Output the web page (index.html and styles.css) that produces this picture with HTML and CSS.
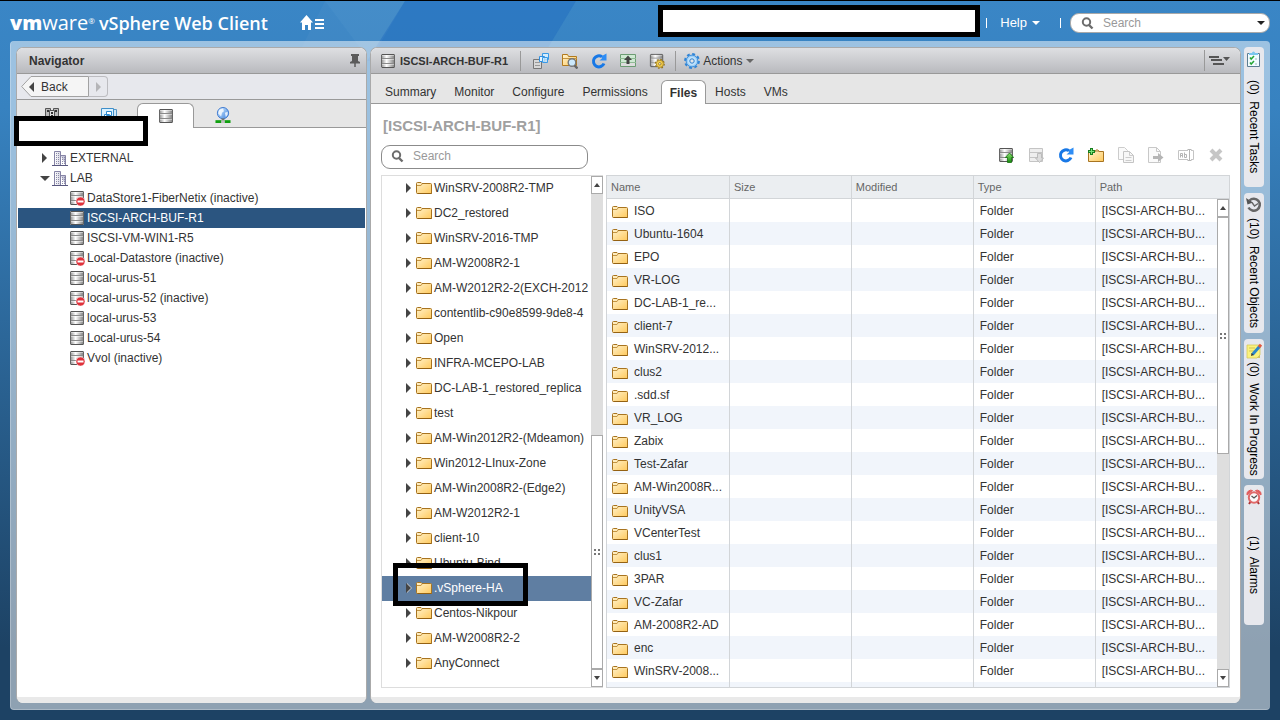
FILE: index.html
```html
<!DOCTYPE html>
<html lang="en">
<head>
<meta charset="utf-8">
<title>vSphere Web Client</title>
<link rel="stylesheet" href="styles.css">
</head>
<body>
<svg class="defs" aria-hidden="true">
  <defs>
    <linearGradient id="gMetal"><stop offset="0" stop-color="#888"/><stop offset=".4" stop-color="#fff"/><stop offset="1" stop-color="#777"/></linearGradient>
    <linearGradient id="gFolder" x2="1" y2="1"><stop offset="0" stop-color="#fff3cf"/><stop offset="1" stop-color="#ffc95c"/></linearGradient>
    <linearGradient id="gGreen" x2="0" y2="1"><stop offset="0" stop-color="#8be36f"/><stop offset="1" stop-color="#17880f"/></linearGradient>
    <linearGradient id="gGlobe" x2="1" y2="1"><stop offset="0" stop-color="#d9efff"/><stop offset="1" stop-color="#3f83e0"/></linearGradient>
    <linearGradient id="gTower" x2="1"><stop offset="0" stop-color="#fff"/><stop offset="1" stop-color="#b9b9cf"/></linearGradient>
  </defs>
  <symbol id="store" viewBox="0 0 16 16"><rect x="1" y="1" width="14" height="14" rx="1" fill="url(#gMetal)"/><path d="M2 1.500h12M2 14.500h12" stroke="#555"/><path d="M1.500 2v12M14.500 2v12" stroke="#666"/><path d="M2 5.500h12M2 10.500h12" stroke="#8a8a8a"/><path d="M2 6.500h12M2 11.500h12M2 2.500h12" stroke="#fff" stroke-opacity=".45"/></symbol>
  <symbol id="storeOff" viewBox="0 0 16 16"><use href="#store" width="16" height="16"/><circle cx="11.500" cy="11.500" r="4.500" fill="#e0313a" stroke="#fff" stroke-width=".5"/><path d="M8.500 11.500h6" stroke="#fff" stroke-width="2"/></symbol>
  <symbol id="dc" viewBox="0 0 16 16"><path d="M2.500 15V1.500h6V15M8.500 5.500h5V15" fill="url(#gTower)" stroke="#8583a5"/><path d="M0 15.500h16" stroke="#57567e"/><path d="M4.500 3v11M6.500 3v11M10.500 7v7M12.500 7v7" stroke="#8a89a8" stroke-dasharray="1 1"/></symbol>
  <symbol id="folder" viewBox="0 0 16 12"><path d="M.5 10.500v-9q0-1 1-1h3.500l1 1h8.500q1 0 1 1v9h-14q-1 0-1-1z" fill="url(#gFolder)" stroke="#a87420"/><path d="M1 3.500h4l1-1.500" fill="none" stroke="#c39442"/><path d="M1.500 11.500h14" stroke="#946112"/></symbol>
  <symbol id="host" viewBox="0 0 16 16"><path d="M1.500 1.500h5v13h-5zM9.500 1.500h5v13h-5z" fill="#bbb" stroke="#555"/><path d="M5.500 3.500h5v11h-5z" fill="#e2e2e2" stroke="#555"/><path d="M3 4h2M11 4h2M7 6h2M7 9h2" stroke="#333" stroke-width="2"/></symbol>
  <symbol id="vms" viewBox="0 0 16 16"><path d="M4.500 2.500h11v12h-11z" fill="#cfe6f7" stroke="#5797c6"/><path d="M.5 1.500h12v13H.5z" fill="#d9f1ff" stroke="#3f8fc9"/><path d="M5.500 4.500h5v4h-5zM3.500 7.500h5v4h-5z" fill="#fff" stroke="#2a88ce"/></symbol>
  <symbol id="globe" viewBox="0 0 16 17"><circle cx="8" cy="6.500" r="6" fill="url(#gGlobe)" stroke="#3c78cf"/><path d="M4 3l4-1.500 1 3-2 1.500-1 4-3-3zM10 6l3-1v3l-2 3z" fill="#fff" fill-opacity=".8"/><path d="M8 12v3" stroke="#777" stroke-width="3"/><path d="M0 15.500h16" stroke="#10a010" stroke-width="3"/><path d="M6 15.500h4" stroke="#bfbfbf" stroke-width="3"/></symbol>
  <symbol id="find" viewBox="0 0 16 16"><circle cx="7.500" cy="7" r="3.700" fill="none" stroke="#6c6c6c" stroke-width="2"/><path d="M10 10l3.500 3.500" stroke="#6c6c6c" stroke-width="2.400"/></symbol>
  <symbol id="refresh" viewBox="0 0 16 16"><path d="M13 10.500A5.500 5.500 0 1 1 11 3.800" fill="none" stroke="#1878e6" stroke-width="3"/><path d="M15.500.5v7h-7l2.500-2.300V3z" fill="#2e8df5"/></symbol>
  <symbol id="vmReg" viewBox="0 0 16 16"><path d="M.5 6.500h8v9h-8z" fill="#d8d8d8" stroke="#777"/><path d="M2 9.500h5M2 12.500h5" stroke="#999"/><path d="M9.500.500h6v6h-6z" fill="#d4edfd" stroke="#3a9ae6"/><path d="M6.500 3.500h5v5h-5z" fill="#e6f5ff" stroke="#2f8fe0"/><path d="M9.500 4.500h5v5h-5z" fill="#c4e5fb" fill-opacity=".8" stroke="#3a9ae6"/></symbol>
  <symbol id="browse" viewBox="0 0 16 16"><path d="M.5 12.500v-11h5l1 2h8v9z" fill="url(#gFolder)" stroke="#b27a1d"/><path d="M1 5.500h14" stroke="#c39442"/><circle cx="10" cy="9.500" r="3.800" fill="#cbe8fb" stroke="#777" stroke-width="1.400"/><path d="M12.500 12.500l3 3" stroke="#666" stroke-width="2.400"/></symbol>
  <symbol id="upload" viewBox="0 0 16 16"><path d="M.5 1.500h15v12H.5z" fill="#cfe9d3" stroke="#6c9c73"/><path d="M0 5.500h16M0 9.500h16" stroke="#8fbb94"/><path d="M1 10h14v3H1z" fill="#ddd"/><path d="M8 2.500l4 4.500H9.500v4h-3V7H4z" fill="#444"/></symbol>
  <symbol id="storeGear" viewBox="0 0 17 17"><use href="#store" width="16" height="16"/><circle cx="11.500" cy="11.500" r="4.600" fill="none" stroke="#94751b" stroke-width="1.500" stroke-dasharray="1.800 1.800"/><circle cx="11.500" cy="11.500" r="3.800" fill="#f4cf4e" stroke="#b08d2a"/><circle cx="11.500" cy="11.500" r="1.300" fill="#fff" stroke="#94751b"/></symbol>
  <symbol id="gear" viewBox="0 0 16 16"><circle cx="8" cy="8" r="6.900" fill="none" stroke="#2f84d6" stroke-width="2" stroke-dasharray="2.900 2.520"/><circle cx="8" cy="8" r="5.900" fill="#9fd0f7" stroke="#3d8edb"/><circle cx="8" cy="8" r="4" fill="#c5e4fb"/><circle cx="8" cy="8" r="2.200" fill="#e4e5e8" stroke="#2c80d0"/></symbol>
  <symbol id="storeUp" viewBox="0 0 16 16"><use href="#store" width="16" height="16"/><path d="M11.500 6l4.200 4.500h-2.200v5h-4v-5H7.300z" fill="url(#gGreen)" stroke="#14720d" stroke-width=".8"/></symbol>
  <symbol id="storeDown" viewBox="0 0 16 16"><path d="M1.500 1.500h13v13h-13z" fill="#eee" stroke="#c4c4c4"/><path d="M2 5.500h12M2 10.500h12" stroke="#c4c4c4"/><path d="M9.500 6.500h4v4.500h2l-4 4.500-4-4.500h2z" fill="#ddd" stroke="#bbb"/></symbol>
  <symbol id="newFolder" viewBox="0 0 16 16"><path d="M.5 14.500v-10h15v10z" fill="url(#gFolder)" stroke="#a87420"/><path d="M7 4.500l1-1.500h2l1 1.500" fill="#fff3cf" stroke="#a87420"/><path d="M3.500 1v7M0 4.500h7" stroke="#187f1f" stroke-width="3"/><path d="M3.500 2v5M1 4.500h5" stroke="#7be07a"/></symbol>
  <symbol id="copy" viewBox="0 0 16 16"><path d="M.5.500h6l3 3v9h-9z" fill="#fafafa" stroke="#ccc"/><path d="M5.500 4.500h6l4 4v7h-10z" fill="#f7f7f7" stroke="#c4c4c4"/><path d="M11.500 4.500v4h4M7.500 10.500h6M7.500 13.500h6" fill="none" stroke="#ccc"/></symbol>
  <symbol id="move" viewBox="0 0 16 16"><path d="M.5.500h8l4 4v11H.5z" fill="#fafafa" stroke="#c8c8c8"/><path d="M8.500.500v4h4" fill="none" stroke="#c8c8c8"/><path d="M5 9h5V6l5.500 4.500L10 15v-3H5z" fill="#b5b5b5"/></symbol>
  <symbol id="rename" viewBox="0 0 16 16"><path d="M10 3.500H.5v9H10M13 3.500h2.500v9H13" fill="none" stroke="#c4c4c4"/><path d="M2.500 10.500v-4h2v4M2.500 8.500h2M6.500 5.500v5h2v-3h-2M9.500 2.500h4M9.500 13.500h4M11.500 2.500v11" fill="none" stroke="#b5b5b5"/></symbol>
  <symbol id="remove" viewBox="0 0 16 16"><path d="M3 3l10 10M13 3L3 13" stroke="#c6c6c6" stroke-width="4"/></symbol>
  <symbol id="pin" viewBox="0 0 10 14"><path d="M1 0h8v2H8v5l2 1v1.500H0V8l2-1V2H1z" fill="#5b5b5b"/><path d="M5 9v4" stroke="#5b5b5b" stroke-width="1.500"/></symbol>
  <symbol id="tasks" viewBox="0 0 16 16"><path d="M1.500 2.500h12v13h-12z" fill="#f1fbff" stroke="#5c7d92"/><path d="M3 4V2h3a1.500 1.500 0 0 1 3 0h3v2z" fill="#7bc6ee"/><path d="M4 6.500l1.200 1.500L8 5M4 11.500l1.200 1.500L8 10" fill="none" stroke="#25a634" stroke-width="1.500"/><path d="M9 8h2M9 13h2" stroke="#9bb"/></symbol>
  <symbol id="recent" viewBox="0 0 16 16"><path d="M3.500 3.500A6 6 0 1 1 2.500 10.500" fill="none" stroke="#666" stroke-width="2.500"/><path d="M0 1l1.500 6.500L7 5.500z" fill="#555"/><path d="M6 5.500L8.500 9 12 6.500" fill="none" stroke="#666" stroke-width="1.300"/></symbol>
  <symbol id="note" viewBox="0 0 16 16"><path d="M1 2h13v10l-3 3H1z" fill="#fbf27c" stroke="#d6c95a" stroke-width=".8"/><path d="M3 5h6M3 8h5" stroke="#cfc357"/><path d="M14 15l-3-.2 3-3z" fill="#cfc05a"/><path d="M6.500 11.500L13.500 3.500" stroke="#2c87c9" stroke-width="3"/><path d="M13 4l2-2.300" stroke="#e2583e" stroke-width="3"/><path d="M5 13l.5-3 2.300 2z" fill="#333"/></symbol>
  <symbol id="alarm" viewBox="0 0 16 16"><path d="M1 6A4 4 0 0 1 6.500 1.500zM15 6A4 4 0 0 0 9.500 1.500z" fill="#e15b5b" stroke="#e15b5b"/><path d="M3 15l2-3M13 15l-2-3" stroke="#a33" stroke-width="2"/><circle cx="8" cy="8.500" r="5.200" fill="#fafafa" stroke="#e06a6a" stroke-width="2"/><path d="M5.500 7L8 9l3-2.500" fill="none" stroke="#555" stroke-width="1.300"/></symbol>
</svg>

<svg class="facets" viewBox="0 0 1280 60" aria-hidden="true">
  <path d="M325 0H405L370 60z" fill="#fff" fill-opacity=".06"/>
  <path d="M325 0L295 60H370z" fill="#fff" fill-opacity=".03"/>
  <path d="M405 0H576L540 60H367z" fill="#1c66bd" fill-opacity=".4"/>
</svg>

<header class="topbar">
  <div class="brand"><span class="brand-mark"><b>vm</b>ware<sup>®</sup></span> <span class="brand-name">vSphere Web Client</span></div>
  <button class="home" aria-label="Home menu"><svg width="24" height="16" viewBox="0 0 24 16"><path d="M6.500 0L13 7.500h-2V15H8v-5H5v5H2V7.500H0z" fill="#fff"/><path d="M15 5h9M15 9h9M15 13h9" stroke="#fff" stroke-width="2"/></svg></button>
  <div class="redacted redacted-user"></div>
  <button class="help">Help <span class="caret"></span></button>
  <label class="search search-top"><svg class="i16"><use href="#find"/></svg><input type="text" placeholder="Search" aria-label="Search inventory"><span class="caret dark"></span></label>
</header>

<div class="shell">
  <aside class="panel navigator">
    <div class="panel-head"><h2>Navigator</h2><svg class="pin"><use href="#pin"/></svg></div>
    <div class="history">
      <button class="back"><svg class="back-shape" width="68" height="21" viewBox="0 0 68 21"><path d="M.7 10.500L10 .5h57.500v20H10z" fill="#f5f5f5" stroke="#a2a2a2"/></svg><span class="tri left"></span><span>Back</span></button><button class="forward" aria-label="Forward"><span class="tri pale"></span></button>
    </div>
    <div class="nav-tabs">
      <button aria-label="Hosts and Clusters"><svg class="i16"><use href="#host"/></svg></button>
      <button aria-label="VMs and Templates"><svg class="i16"><use href="#vms"/></svg></button>
      <button class="on" aria-label="Storage"><svg class="i16"><use href="#store"/></svg></button>
      <button aria-label="Networking"><svg class="i16"><use href="#globe"/></svg></button>
    </div>
    <div class="redacted redacted-nav"></div>
    <ul class="inventory">
      <li class="dc"><span class="tri"></span><svg class="i16"><use href="#dc"/></svg>EXTERNAL</li>
      <li class="dc"><span class="tri open"></span><svg class="i16"><use href="#dc"/></svg>LAB</li>
      <li><svg class="i16"><use href="#storeOff"/></svg>DataStore1-FiberNetix (inactive)</li>
      <li class="on"><svg class="i16"><use href="#store"/></svg>ISCSI-ARCH-BUF-R1</li>
      <li><svg class="i16"><use href="#store"/></svg>ISCSI-VM-WIN1-R5</li>
      <li><svg class="i16"><use href="#storeOff"/></svg>Local-Datastore (inactive)</li>
      <li><svg class="i16"><use href="#store"/></svg>local-urus-51</li>
      <li><svg class="i16"><use href="#storeOff"/></svg>local-urus-52 (inactive)</li>
      <li><svg class="i16"><use href="#store"/></svg>local-urus-53</li>
      <li><svg class="i16"><use href="#store"/></svg>Local-urus-54</li>
      <li><svg class="i16"><use href="#storeOff"/></svg>Vvol (inactive)</li>
    </ul>
  </aside>

  <main class="panel object">
    <div class="panel-head">
      <svg class="i16"><use href="#store"/></svg><h1>ISCSI-ARCH-BUF-R1</h1>
      <div class="quick">
        <button aria-label="Register VM"><svg class="i16"><use href="#vmReg"/></svg></button>
        <button aria-label="Browse files"><svg class="i16"><use href="#browse"/></svg></button>
        <button aria-label="Refresh"><svg class="i16"><use href="#refresh"/></svg></button>
        <button aria-label="Increase capacity"><svg class="i16"><use href="#upload"/></svg></button>
        <button aria-label="Storage settings"><svg class="i16"><use href="#storeGear"/></svg></button>
      </div>
      <button class="actions"><svg class="i16"><use href="#gear"/></svg>Actions <span class="caret grey"></span></button>
      <button class="layout" aria-label="Layout menu"><svg width="22" height="10" viewBox="0 0 22 10"><path d="M0 1h10M2 4h11M4 8h11" stroke="#555" stroke-width="2"/><path d="M14 1h7l-3.500 4z" fill="#555"/></svg></button>
    </div>
    <nav class="tabs">
      <a href="#summary">Summary</a><a href="#monitor">Monitor</a><a href="#configure">Configure</a><a href="#permissions">Permissions</a><a href="#files" class="on">Files</a><a href="#hosts">Hosts</a><a href="#vmlist">VMs</a>
    </nav>
    <section class="files">
      <h3>[ISCSI-ARCH-BUF-R1]</h3>
      <div class="tools">
        <label class="search"><svg class="i16"><use href="#find"/></svg><input type="text" placeholder="Search" aria-label="Search files"></label>
        <div class="file-actions">
          <button aria-label="Upload"><svg class="i16"><use href="#storeUp"/></svg></button>
          <button aria-label="Download" disabled><svg class="i16"><use href="#storeDown"/></svg></button>
          <button aria-label="Refresh files"><svg class="i16"><use href="#refresh"/></svg></button>
          <button aria-label="New folder"><svg class="i16"><use href="#newFolder"/></svg></button>
          <button aria-label="Copy" disabled><svg class="i16"><use href="#copy"/></svg></button>
          <button aria-label="Move" disabled><svg class="i16"><use href="#move"/></svg></button>
          <button aria-label="Rename" disabled><svg class="i16"><use href="#rename"/></svg></button>
          <button aria-label="Delete" disabled><svg class="i16"><use href="#remove"/></svg></button>
        </div>
      </div>
      <div class="split">
        <div class="tree">
          <ul>
            <li><span class="tri"></span><svg class="fold"><use href="#folder"/></svg>WinSRV-2008R2-TMP</li>
            <li><span class="tri"></span><svg class="fold"><use href="#folder"/></svg>DC2_restored</li>
            <li><span class="tri"></span><svg class="fold"><use href="#folder"/></svg>WinSRV-2016-TMP</li>
            <li><span class="tri"></span><svg class="fold"><use href="#folder"/></svg>AM-W2008R2-1</li>
            <li><span class="tri"></span><svg class="fold"><use href="#folder"/></svg>AM-W2012R2-2(EXCH-2012</li>
            <li><span class="tri"></span><svg class="fold"><use href="#folder"/></svg>contentlib-c90e8599-9de8-4</li>
            <li><span class="tri"></span><svg class="fold"><use href="#folder"/></svg>Open</li>
            <li><span class="tri"></span><svg class="fold"><use href="#folder"/></svg>INFRA-MCEPO-LAB</li>
            <li><span class="tri"></span><svg class="fold"><use href="#folder"/></svg>DC-LAB-1_restored_replica</li>
            <li><span class="tri"></span><svg class="fold"><use href="#folder"/></svg>test</li>
            <li><span class="tri"></span><svg class="fold"><use href="#folder"/></svg>AM-Win2012R2-(Mdeamon)</li>
            <li><span class="tri"></span><svg class="fold"><use href="#folder"/></svg>Win2012-LInux-Zone</li>
            <li><span class="tri"></span><svg class="fold"><use href="#folder"/></svg>AM-Win2008R2-(Edge2)</li>
            <li><span class="tri"></span><svg class="fold"><use href="#folder"/></svg>AM-W2012R2-1</li>
            <li><span class="tri"></span><svg class="fold"><use href="#folder"/></svg>client-10</li>
            <li><span class="tri"></span><svg class="fold"><use href="#folder"/></svg>Ubuntu-Bind</li>
            <li class="on"><span class="tri"></span><svg class="fold"><use href="#folder"/></svg>.vSphere-HA<span class="marker"></span></li>
            <li><span class="tri"></span><svg class="fold"><use href="#folder"/></svg>Centos-Nikpour</li>
            <li><span class="tri"></span><svg class="fold"><use href="#folder"/></svg>AM-W2008R2-2</li>
            <li><span class="tri"></span><svg class="fold"><use href="#folder"/></svg>AnyConnect</li>
          </ul>
          <div class="scroll scroll-tree"><button aria-label="Scroll up"><span class="arrow up"></span></button><div class="gap"></div><div class="thumb"><span class="grip"></span></div><button aria-label="Scroll down"><span class="arrow"></span></button></div>
        </div>
        <div class="grid">
          <table>
            <colgroup><col class="c"><col class="c"><col class="c"><col class="c"><col></colgroup>
            <thead><tr><th>Name</th><th>Size</th><th>Modified</th><th>Type</th><th>Path</th></tr></thead>
            <tbody>
              <tr><td><svg class="fold"><use href="#folder"/></svg>ISO</td><td></td><td></td><td>Folder</td><td>[ISCSI-ARCH-BU...</td></tr>
              <tr><td><svg class="fold"><use href="#folder"/></svg>Ubuntu-1604</td><td></td><td></td><td>Folder</td><td>[ISCSI-ARCH-BU...</td></tr>
              <tr><td><svg class="fold"><use href="#folder"/></svg>EPO</td><td></td><td></td><td>Folder</td><td>[ISCSI-ARCH-BU...</td></tr>
              <tr><td><svg class="fold"><use href="#folder"/></svg>VR-LOG</td><td></td><td></td><td>Folder</td><td>[ISCSI-ARCH-BU...</td></tr>
              <tr><td><svg class="fold"><use href="#folder"/></svg>DC-LAB-1_re...</td><td></td><td></td><td>Folder</td><td>[ISCSI-ARCH-BU...</td></tr>
              <tr><td><svg class="fold"><use href="#folder"/></svg>client-7</td><td></td><td></td><td>Folder</td><td>[ISCSI-ARCH-BU...</td></tr>
              <tr><td><svg class="fold"><use href="#folder"/></svg>WinSRV-2012...</td><td></td><td></td><td>Folder</td><td>[ISCSI-ARCH-BU...</td></tr>
              <tr><td><svg class="fold"><use href="#folder"/></svg>clus2</td><td></td><td></td><td>Folder</td><td>[ISCSI-ARCH-BU...</td></tr>
              <tr><td><svg class="fold"><use href="#folder"/></svg>.sdd.sf</td><td></td><td></td><td>Folder</td><td>[ISCSI-ARCH-BU...</td></tr>
              <tr><td><svg class="fold"><use href="#folder"/></svg>VR_LOG</td><td></td><td></td><td>Folder</td><td>[ISCSI-ARCH-BU...</td></tr>
              <tr><td><svg class="fold"><use href="#folder"/></svg>Zabix</td><td></td><td></td><td>Folder</td><td>[ISCSI-ARCH-BU...</td></tr>
              <tr><td><svg class="fold"><use href="#folder"/></svg>Test-Zafar</td><td></td><td></td><td>Folder</td><td>[ISCSI-ARCH-BU...</td></tr>
              <tr><td><svg class="fold"><use href="#folder"/></svg>AM-Win2008R...</td><td></td><td></td><td>Folder</td><td>[ISCSI-ARCH-BU...</td></tr>
              <tr><td><svg class="fold"><use href="#folder"/></svg>UnityVSA</td><td></td><td></td><td>Folder</td><td>[ISCSI-ARCH-BU...</td></tr>
              <tr><td><svg class="fold"><use href="#folder"/></svg>VCenterTest</td><td></td><td></td><td>Folder</td><td>[ISCSI-ARCH-BU...</td></tr>
              <tr><td><svg class="fold"><use href="#folder"/></svg>clus1</td><td></td><td></td><td>Folder</td><td>[ISCSI-ARCH-BU...</td></tr>
              <tr><td><svg class="fold"><use href="#folder"/></svg>3PAR</td><td></td><td></td><td>Folder</td><td>[ISCSI-ARCH-BU...</td></tr>
              <tr><td><svg class="fold"><use href="#folder"/></svg>VC-Zafar</td><td></td><td></td><td>Folder</td><td>[ISCSI-ARCH-BU...</td></tr>
              <tr><td><svg class="fold"><use href="#folder"/></svg>AM-2008R2-AD</td><td></td><td></td><td>Folder</td><td>[ISCSI-ARCH-BU...</td></tr>
              <tr><td><svg class="fold"><use href="#folder"/></svg>enc</td><td></td><td></td><td>Folder</td><td>[ISCSI-ARCH-BU...</td></tr>
              <tr><td><svg class="fold"><use href="#folder"/></svg>WinSRV-2008...</td><td></td><td></td><td>Folder</td><td>[ISCSI-ARCH-BU...</td></tr>
              <tr><td></td><td></td><td></td><td></td><td></td></tr>
            </tbody>
          </table>
          <div class="scroll scroll-grid"><button aria-label="Scroll list up"><span class="arrow up"></span></button><div class="thumb"><span class="grip"></span></div><div class="gap"></div><button aria-label="Scroll list down"><span class="arrow"></span></button></div>
        </div>
      </div>
    </section>
  </main>

  <div class="dock">
    <button><svg class="i16"><use href="#tasks"/></svg><span>(0)&nbsp; Recent Tasks</span></button>
    <button><svg class="i16"><use href="#recent"/></svg><span>(10)&nbsp; Recent Objects</span></button>
    <button><svg class="i16"><use href="#note"/></svg><span>(0)&nbsp; Work In Progress</span></button>
    <button><svg class="i16"><use href="#alarm"/></svg><span>(1)&nbsp; Alarms</span></button>
  </div>
</div>
</body>
</html>
```

FILE: styles.css
```css
* { box-sizing: border-box; }
body {
  margin: 0;
  height: 100vh;
  display: flex;
  flex-direction: column;
  position: relative;
  overflow: hidden;
  border-top: 1px solid #000;
  background: linear-gradient(#3a86c6 0, #3782c0 15%, #1d4264 90%, #1d4264);
  font: 12px/16px "Liberation Sans", Arial, sans-serif;
  color: #333;
}
h1, h2, h3, ul { margin: 0; padding: 0; list-style: none; }
h1, h2 { font-size: 12px; color: #333; }
button { font: inherit; color: inherit; background: none; border: 0; padding: 0; margin: 0; }
input { font: inherit; border: 0; outline: 0; padding: 0; background: none; flex: 1; min-width: 0; }
input::placeholder { color: #999; opacity: 1; }
.defs { position: absolute; width: 0; height: 0; }
.facets { position: absolute; left: 0; top: 0; width: 1280px; height: 60px; }
.i16 { width: 16px; height: 16px; display: block; flex: none; }
.fold { width: 16px; height: 12px; flex: none; }

/* Small triangles */
.caret { display: inline-block; border: 4px solid transparent; border-top-color: #fff; border-bottom: 0; }
.caret.dark { border-top-color: #222; }
.caret.grey { border-top-color: #666; }
.tri { border: 5px solid transparent; border-left-color: #444; border-right: 0; flex: none; }
.tri.open { border: 5px solid transparent; border-top-color: #444; border-bottom: 0; }
.tri.left { border: 5px solid transparent; border-right-color: #444; border-left: 0; }
.tri.pale { border-left-color: #b5b5b8; }

/* Top bar */
.topbar { position: relative; display: flex; align-items: center; flex: none; height: 40px; padding: 3px 10px 0; color: #fff; }
.brand { display: flex; align-items: baseline; gap: 4px; font: 18px/24px "Open Sans", sans-serif; white-space: nowrap; }
.brand-mark { font-size: 20px; }
.brand-mark b { font-weight: 800; }
.brand-mark sup { font-size: 8px; line-height: 8px; vertical-align: 6px; }
.brand-name { font-weight: 600; }
.home { margin-left: 32px; display: flex; }
.redacted { background: #fff; border: 5px solid #000; }
.redacted-user { width: 322px; height: 32px; margin-left: auto; margin-bottom: 4px; }
.help { display: flex; align-items: center; gap: 5px; margin-left: 6px; padding: 0 20px 0 13px; border: solid #fff; border-width: 0 1px; height: 10px; font-size: 13px; }
.search { display: flex; align-items: center; gap: 8px; width: 207px; height: 24px; padding: 0 9px 2px 7px; border: 1px solid #8b8b8b; border-radius: 9px; background: #fff; }
.search-top { width: 200px; height: 20px; margin-left: 9px; padding: 0 4px 0 8px; border-color: #a9a9a9; }

/* Work area */
.shell { position: relative; flex: 1; min-height: 0; display: flex; margin: 0 10px 10px; padding: 6px 6px 6px 5px; border: 1px solid rgba(255,255,255,.25); border-width: 0 0 1px 1px; border-radius: 4px; background: rgba(255,255,255,.5); }
.panel { display: flex; flex-direction: column; border: 1px solid #aaa; border-bottom: 0; border-radius: 7px; background: #fff; overflow: hidden; position: relative; }
.panel::after { content: ""; flex: none; height: 6px; background: #e9e9e9; }
.panel-head { display: flex; align-items: center; flex: none; height: 26px; border-bottom: 1px solid #999; background: linear-gradient(#dedfe2, #b9babe); }
.navigator { flex: 0 0 351px; margin-right: 3px; overflow: visible; }
.navigator .panel-head { padding: 0 6px 0 12px; justify-content: space-between; border-radius: 6px 6px 0 0; }
.navigator::after { margin-top: auto; border-radius: 0 0 6px 6px; }
.pin { width: 10px; height: 14px; }
.history { display: flex; align-items: center; flex: none; height: 26px; padding-left: 4px; background: #e7e8ed; border-bottom: 1px solid #999; }
.back { position: relative; display: flex; align-items: center; gap: 7px; width: 68px; height: 21px; padding-left: 8px; }
.back-shape { position: absolute; left: 0; top: 0; }
.back span { position: relative; }
.forward { width: 19px; height: 21px; padding-left: 7px; border: 1px solid #bcbcc0; border-left: 0; border-radius: 0 4px 4px 0; display: flex; align-items: center; }
.nav-tabs { display: flex; align-items: flex-end; flex: none; height: 28px; padding-left: 6px; background: #e6e6e6; border-bottom: 1px solid #999; }
.nav-tabs button { width: 57px; height: 25px; display: flex; align-items: center; justify-content: center; }
.nav-tabs .on { margin-bottom: -1px; border: 1px solid #999; border-bottom: 0; border-radius: 6px 6px 0 0; background: #fff; }
.redacted-nav { position: absolute; left: -3px; top: 68px; width: 134px; height: 30px; }
.inventory { padding-top: 20px; }
.inventory li { display: flex; align-items: center; gap: 2px; height: 20px; margin: 0 1px; padding-left: 51px; white-space: nowrap; }
.inventory .dc { padding-left: 24px; }
.inventory .tri { width: 8px; }
.inventory .tri.open { margin-left: -2px; width: 10px; }
.inventory .on { background: #2b5580; color: #fff; }

/* Object view */
.object { flex: 1; min-width: 0; margin-right: 3px; }
.object .panel-head { padding: 0 9px; }
.object h1 { margin-left: 4px; font-size: 11px; white-space: nowrap; }
.quick, .actions { display: flex; align-items: center; height: 20px; border-left: 1px solid #999; }
.quick { gap: 13px; margin-left: 12px; padding: 0 10px 0 12px; }
.actions { padding-left: 8px; gap: 3px; }
.layout { display: flex; align-items: center; height: 21px; margin-left: auto; padding-left: 4px; border-left: 1px solid #999; }
.tabs { display: flex; align-items: flex-end; flex: none; height: 30px; padding-left: 5px; background: #e6e6e6; border-bottom: 1px solid #999; }
.tabs a { padding: 0 9px 3px; color: #333; text-decoration: none; }
.tabs .on { margin: 0 0 -1px 4px; padding: 4px 8px 3px; border: 1px solid #999; border-bottom: 0; border-radius: 6px 6px 0 0; background: #fff; font-weight: bold; }
.files { flex: 1; min-height: 0; display: flex; flex-direction: column; padding: 12px 10px 9px; }
h3 { padding-left: 2px; font-size: 15px; line-height: 20px; color: #a0a0a0; }
.tools { display: flex; justify-content: space-between; align-items: center; margin: 9px 6px 6px 0; flex: none; }
.file-actions { display: flex; gap: 14px; margin-bottom: 4px; }
.split { flex: 1; min-height: 0; display: flex; gap: 3px; }
.tree { flex: 0 0 222px; display: flex; border: 1px solid #ddd; border-right: 0; }
.tree ul { flex: 1; min-width: 0; }
.tree li { position: relative; display: flex; align-items: center; height: 25px; padding: 0 0 2px 24px; white-space: nowrap; gap: 2px; }
.tree .tri { margin-right: 3px; }
.tree .on { background: #5f7ea2; color: #fff; }
.tree .on .tri { filter: drop-shadow(1px 0 0 #ccc); }
.marker { position: absolute; left: 11px; top: -13px; width: 135px; height: 43px; border: 5px solid #000; }
.grid { position: relative; flex: 1; min-width: 0; border: 1px solid #d2d5d8; overflow: hidden; }
table { width: 100%; table-layout: fixed; border-collapse: separate; border-spacing: 0; }
.c { width: 19.6%; }
th { height: 23px; padding: 0 4px; border-left: 1px solid #d2d5d8; border-bottom: 1px solid #d2d5d8; background: #ebeef1; color: #666; font-size: 11px; font-weight: normal; text-align: left; }
td { height: 23px; padding: 0 0 0 6px; border-left: 1px solid #d2d5d8; white-space: nowrap; }
th:first-child, td:first-child { border-left: 0; }
td:first-child { padding-left: 5px; }
td .fold { margin-right: 6px; vertical-align: -3px; }
tbody tr:nth-child(even) { background: #f1f5fb; }

/* Scroll bars */
.scroll { display: flex; flex-direction: column; flex: none; width: 12px; background: #dedede; }
.scroll button { height: 18px; flex: none; display: flex; align-items: center; justify-content: center; border: 1px solid #aaa; background: #fff; }
.arrow { border: 3px solid transparent; border-top: 4px solid #444; border-bottom: 0; }
.arrow.up { border: 3px solid transparent; border-bottom: 4px solid #444; border-top: 0; }
.thumb { display: flex; align-items: center; justify-content: center; border: 1px solid #aaa; background: #fff; }
.grip { width: 6px; height: 6px; border: dotted #777; border-width: 2px 0; }
.scroll-tree .gap { flex: 243; }
.scroll-tree .thumb { flex: 233; }
.scroll-grid { position: absolute; right: 0; top: 23px; bottom: 0; }
.scroll-grid .thumb { flex: 237; }
.scroll-grid .gap { flex: 216; }

/* Side dock */
.dock { display: flex; flex-direction: column; gap: 6px; flex: none; width: 20px; }
.dock button { display: flex; flex-direction: column; align-items: center; height: 140px; padding-top: 4px; border-radius: 4px; background: #e7e8ed; color: #000; }
.dock span { flex: 1; writing-mode: vertical-rl; text-align: center; white-space: nowrap; }
```
